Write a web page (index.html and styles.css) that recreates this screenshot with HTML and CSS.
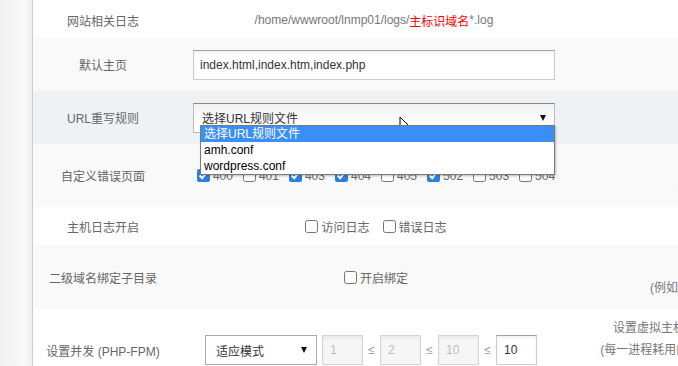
FILE: index.html
```html
<!DOCTYPE html>
<html lang="zh-CN">
<head>
  <meta charset="UTF-8">
  <title>编辑虚拟主机</title>
  <link rel="stylesheet" href="styles.css">
</head>
<body>
<div class="page">
  <aside class="side"></aside>

  <main class="form">
    <div class="row r1">
      <div class="label">网站相关日志</div>
      <div class="value text">/home/wwwroot/lnmp01/logs/<span class="red">主标识域名</span>*.log</div>
      <div class="note"></div>
    </div>

    <div class="row r2 grey">
      <div class="label">默认主页</div>
      <div class="value"><input class="input wide" type="text" value="index.html,index.htm,index.php"></div>
      <div class="note"></div>
    </div>

    <div class="row r3 hover">
      <div class="label">URL重写规则</div>
      <div class="value">
        <div class="select-wrap">
          <div class="select wide">选择URL规则文件<span class="arrow"></span></div>
          <ul class="options">
            <li class="active">选择URL规则文件</li>
            <li>amh.conf</li>
            <li>wordpress.conf</li>
          </ul>
        </div>
      </div>
      <div class="note"></div>
    </div>

    <div class="row r4 grey">
      <div class="label">自定义错误页面</div>
      <div class="value checks tight">
        <label class="check"><input type="checkbox" checked>400</label>
        <label class="check"><input type="checkbox">401</label>
        <label class="check"><input type="checkbox" checked>403</label>
        <label class="check"><input type="checkbox" checked>404</label>
        <label class="check"><input type="checkbox">405</label>
        <label class="check"><input type="checkbox" checked>502</label>
        <label class="check"><input type="checkbox">503</label>
        <label class="check"><input type="checkbox">504</label>
      </div>
      <div class="note">选择自定义错误页面<br>(页面位于网站目录ErrorPages)</div>
    </div>

    <div class="row r5">
      <div class="label">主机日志开启</div>
      <div class="value checks">
        <label class="check"><input type="checkbox">访问日志</label>
        <label class="check"><input type="checkbox">错误日志</label>
      </div>
      <div class="note"></div>
    </div>

    <div class="row r6 grey">
      <div class="label">二级域名绑定子目录</div>
      <div class="value checks">
        <label class="check"><input type="checkbox">开启绑定</label>
      </div>
      <div class="note">开启子目录绑定二级域名<br>(例如 bbs.amysql.com 绑定到 bbs子目录)</div>
    </div>

    <div class="row r7">
      <div class="label">设置并发 (PHP-FPM)</div>
      <div class="value fpm">
        <div class="select small">适应模式<span class="arrow"></span></div>
        <input class="input num" type="text" value="1" disabled>
        <span class="le">≤</span>
        <input class="input num" type="text" value="2" disabled>
        <span class="le">≤</span>
        <input class="input num" type="text" value="10" disabled>
        <span class="le">≤</span>
        <input class="input num" type="text" value="10">
      </div>
      <div class="note">设置虚拟主机PHP-FPM的运行模式与子进程的数量范围<br>(每一进程耗用内存约20M，请按照您的服务器实际内存设置)<br>需要重启虚拟主机后生效</div>
    </div>
  </main>

  <svg class="cursor" width="15" height="22" viewBox="0 0 15 22">
    <path d="M1 1 L1 17.5 L5 13.8 L7.8 20.3 L10.3 19.2 L7.6 12.8 L12.8 12.8 Z" fill="#fff" stroke="#000" stroke-width="1" stroke-linejoin="round"/>
  </svg>
</div>
</body>
</html>
```

FILE: styles.css
```css
body {
  margin: 0;
  font-family: 'Liberation Sans', 'Noto Sans CJK SC', sans-serif;
  font-size: 12px;
  color: #666;
  background: #fff;
  overflow: hidden;
}
.page {
  position: relative;
  display: flex;
  width: 1000px;
  height: 366px;
  overflow: hidden;
}
.side {
  flex: none;
  width: 32px;
  border-right: 1px solid #cdcdcd;
  background: linear-gradient(to right, #f1f1f1, #f8f8f8 75%, #efefef);
}
.form {
  flex: none;
  width: 912px;
}
.row {
  display: grid;
  grid-template-columns: 140px 402px 370px;
  align-items: center;
  box-sizing: border-box;
  background: #fff;
}
.row.grey {
  background: #f9f9f9;
}
.row.hover {
  background: #eff2f5;
}
.r1 { height: 38px; padding-top: 2px; }
.r2 { height: 53px; }
.r3 { height: 53px; }
.r4 { height: 63px; }
.r5 { height: 38px; }
.r6 { height: 64px; }
.r7 { height: 82px; }

.label {
  text-align: center;
  color: #666;
}
.value {
  display: flex;
  justify-content: center;
  align-items: center;
}
.value.text {
  color: #777;
}
.red {
  color: #f00;
}
.note {
  text-align: center;
  line-height: 22px;
  color: #777;
  white-space: nowrap;
}

.input {
  box-sizing: border-box;
  height: 30px;
  padding: 0 6px;
  font: inherit;
  color: #333;
  background: #fff;
  border: 1px solid #ccc;
  border-top-color: #a0a0a0;
  box-shadow: inset 0 2px 3px rgba(0, 0, 0, 0.06);
  outline: none;
}
.input.wide {
  width: 362px;
}
.input.num {
  width: 41px;
  padding: 0 7px;
}
.input:disabled {
  background: #f6f6f6;
  color: #bbb;
  border-color: #d4d4d4;
}

.select-wrap {
  position: relative;
}
.select {
  box-sizing: border-box;
  display: flex;
  align-items: center;
  justify-content: space-between;
  height: 30px;
  color: #333;
  background: linear-gradient(#f1f1f1, #fafafa 40%, #fff);
  border: 1px solid #bbb;
  border-top-color: #8a8a8a;
}
.select.wide {
  width: 362px;
  padding: 0 8px 0 8px;
}
.select.small {
  width: 112px;
  padding: 0 9px 0 10px;
  background: #fff;
  border-color: #aaa;
}
.arrow {
  width: 0;
  height: 0;
  border-left: 3.5px solid transparent;
  border-right: 3.5px solid transparent;
  border-top: 6px solid #111;
}
.options {
  position: absolute;
  top: 22px;
  left: 7px;
  width: 355px;
  box-sizing: border-box;
  margin: 0;
  padding: 0;
  list-style: none;
  background: #fff;
  border: 1px solid #7a7a7a;
  box-shadow: 1px 1px 2px rgba(0, 0, 0, 0.25);
  color: #000;
  z-index: 2;
}
.options li {
  height: 16px;
  line-height: 16px;
  padding: 0 3px;
}
.options li.active {
  background: #3c8ef7;
  color: #fff;
}

.checks {
  gap: 9px;
}
.checks.tight {
  gap: 6px;
}
.check {
  display: inline-flex;
  align-items: center;
  color: #666;
}
.check input {
  width: 13px;
  height: 13px;
  margin: 0 3px 0 4px;
  accent-color: #2f7de1;
}

.fpm {
  gap: 4px;
  justify-content: flex-start;
  padding-left: 32px;
}
.fpm .select {
  margin-right: 1px;
}
.le {
  color: #999;
  width: 9px;
  text-align: center;
}

.cursor {
  position: absolute;
  left: 399px;
  top: 116px;
}
```
